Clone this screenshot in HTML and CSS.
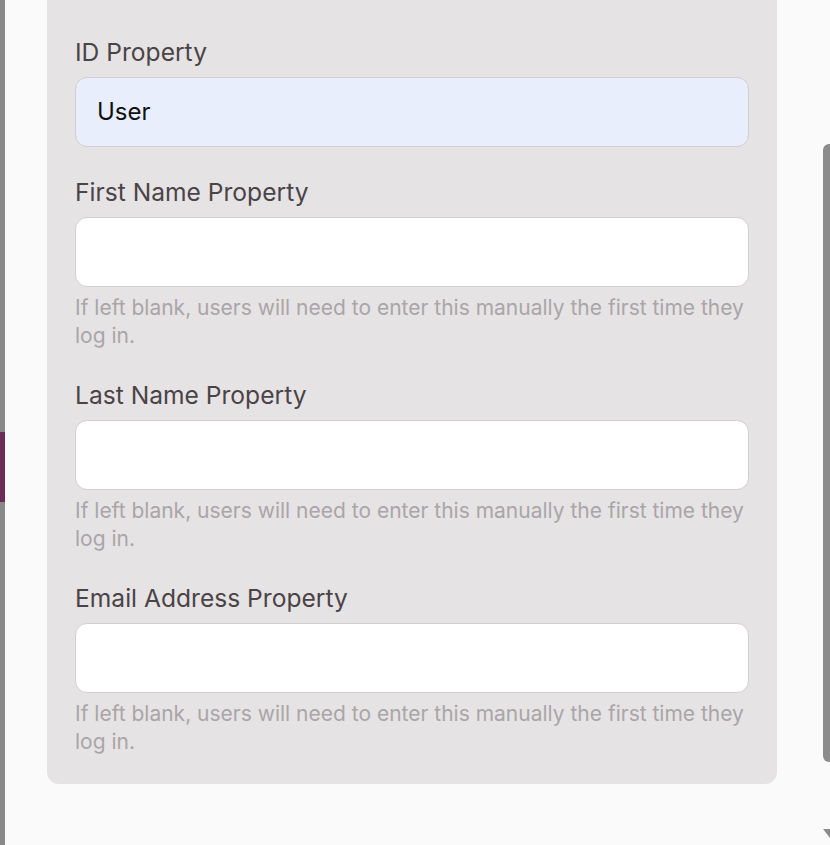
FILE: index.html
```html
<!DOCTYPE html>
<html>
<head>
<meta charset="utf-8">
<link rel="stylesheet" href="styles.css">
</head>
<body>
<div class="page">
  <div class="backdrop"><div class="accent"></div></div>
  <div class="modal">
    <div class="card">
      <div class="field">
        <label class="label">ID Property</label>
        <div class="input filled">User</div>
      </div>
      <div class="field">
        <label class="label">First Name Property</label>
        <div class="input"></div>
        <p class="help">If left blank, users will need to enter this manually the first time they log in.</p>
      </div>
      <div class="field">
        <label class="label">Last Name Property</label>
        <div class="input"></div>
        <p class="help">If left blank, users will need to enter this manually the first time they log in.</p>
      </div>
      <div class="field">
        <label class="label">Email Address Property</label>
        <div class="input"></div>
        <p class="help">If left blank, users will need to enter this manually the first time they log in.</p>
      </div>
    </div>
    <div class="scroll-thumb"></div>
    <div class="scroll-arrow"></div>
  </div>
</div>
</body>
</html>
```

FILE: styles.css
```css
html, body {
  margin: 0;
  padding: 0;
  width: 830px;
  height: 845px;
  overflow: hidden;
  font-family: Inter, "Noto Sans", sans-serif;
  background: #8a8a8a;
}
.page {
  display: flex;
  height: 845px;
}
.backdrop {
  width: 5px;
  flex: none;
  background: #898889;
  padding-top: 432px;
  box-sizing: border-box;
}
.accent {
  height: 70px;
  background: #6d2b5a;
}
.modal {
  position: relative;
  flex: 1;
  background: #fafafa;
  border-bottom-left-radius: 12px;
  height: 856px;
  padding: 0 53px 0 42px;
}
.card {
  background: #e6e3e4;
  border-radius: 0 0 12px 12px;
  padding: 37px 28px 28px;
  display: flex;
  flex-direction: column;
  gap: 30px;
}
.field {
  display: flex;
  flex-direction: column;
}
.label {
  font-size: 24.6px;
  line-height: 30px;
  color: #4a4347;
  margin-bottom: 10px;
}
.input {
  height: 68px;
  border: 1px solid #d1cdd0;
  border-radius: 12px;
  background: #ffffff;
  box-sizing: content-box;
  font-size: 24px;
  line-height: 68px;
  padding: 0 21px;
  color: #111;
}
.input.filled {
  background: #e8eefb;
}
.help {
  margin: 7px 0 0;
  font-size: 21px;
  line-height: 28px;
  color: #aaa5a8;
}
.scroll-thumb {
  position: absolute;
  right: 0;
  top: 144px;
  width: 7px;
  height: 618px;
  background: #8c8c8c;
  border-radius: 6px 0 0 6px;
}
.scroll-arrow {
  position: absolute;
  right: 0;
  top: 829px;
  width: 0;
  height: 0;
  border-left: 7px solid transparent;
  border-top: 9px solid #8c8c8c;
}
```
